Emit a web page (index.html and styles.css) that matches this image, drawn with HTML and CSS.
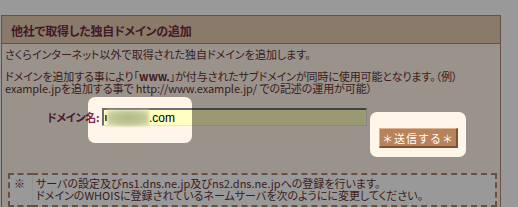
FILE: index.html
```html
<!DOCTYPE html>
<html lang="ja">
<head>
    <meta charset="UTF-8">
    <title>独自ドメインの追加</title>
    <link rel="stylesheet" href="styles.css">
</head>
<body>
    <div class="panel">
        <div class="panel-head">他社で取得した独自ドメインの追加</div>
        <div class="panel-body">
            <p class="lead">さくらインターネット以外で取得された独自ドメインを追加します。</p>
            <p class="note">ドメインを追加する事により「<b>www.</b>」が付与されたサブドメインが同時に使用可能となります。（例）<br>example.jpを追加する事で http://www.example.jp/ での記述の運用が可能）</p>

            <div class="form-row">
                <label class="label">ドメイン名:</label>
                <div class="field">
                    <span class="cut"></span>
                    <span class="blur"></span>
                    <span class="tld">.com</span>
                </div>
            </div>
            <div class="submit-row">
                <button class="submit">＊送信する＊</button>
            </div>

            <table class="caution">
                <tr>
                    <td class="mark">※</td>
                    <td class="msg">サーバの設定及びns1.dns.ne.jp及びns2.dns.ne.jpへの登録を行います。<br>ドメインのWHOISに登録されているネームサーバを次のようにに変更してください。</td>
                </tr>
            </table>
        </div>
    </div>

    <!-- tutorial dimming with two spotlights -->
    <svg class="dim" width="518" height="207" viewBox="0 0 518 207">
        <path fill-rule="evenodd" fill="rgba(0,0,0,0.4)" d="M0 0 H518 V207 H0 Z
            M95 97 H185 A7 7 0 0 1 192 104 V136 A7 7 0 0 1 185 143 H95 A7 7 0 0 1 88 136 V104 A7 7 0 0 1 95 97 Z
            M377 112 H459 A7 7 0 0 1 466 119 V150 A7 7 0 0 1 459 157 H377 A7 7 0 0 1 370 150 V119 A7 7 0 0 1 377 112 Z"/>
    </svg>
</body>
</html>
```

FILE: styles.css
```css
body {
    margin: 0;
    width: 518px;
    height: 207px;
    overflow: hidden;
    background: #fff;
    font-family: "Noto Sans CJK JP", sans-serif;
    font-size: 11px;
    font-feature-settings: "palt";
    color: #663333;
}

.panel {
    margin: 15px 0 0 1px;
    width: 498px;
    height: 200px;
    border: 1px solid #b1856b;
    background: #fff5e8;
}

.panel-head {
    height: 27px;
    line-height: 29px;
    padding-left: 9px;
    background: #e6cbb1;
    border-bottom: 1px solid #b1856b;
    color: #6e2c42;
    font-size: 12px;
    font-weight: bold;
    letter-spacing: -0.2px;
}

.panel-body {
    padding: 4px 0 0 3px;
}

.lead {
    margin: 0;
    line-height: 12px;
}

.note {
    margin: 10px 0 0;
    line-height: 12px;
    letter-spacing: -0.1px;
}

.note b {
    font-weight: bold;
}

.form-row {
    display: flex;
    align-items: center;
    margin-top: 14px;
    padding-left: 42px;
}

.label {
    width: 55px;
    color: #7e2e52;
    font-weight: bold;
    font-size: 11px;
    letter-spacing: -0.3px;
}

.field {
    display: flex;
    align-items: center;
    width: 262px;
    height: 15px;
    background: #ffffc0;
    border-top: 2px solid #6e6e6e;
    border-left: 2px solid #6e6e6e;
    border-bottom: 1px solid #e2e2e2;
    border-right: 1px solid #e2e2e2;
}

.cut {
    width: 2px;
    height: 6px;
    margin-left: 1px;
    background: #333;
}

.blur {
    width: 42px;
    height: 16px;
    background: radial-gradient(ellipse at center, #b2b98a 0%, #c2c796 55%, #e6e8b8 100%);
    filter: blur(1.5px);
}

.tld {
    color: #000;
    font-family: "Liberation Sans", sans-serif;
    font-size: 12px;
    font-feature-settings: normal;
}

.submit-row {
    display: flex;
    justify-content: flex-end;
    padding-right: 42px;
    margin-top: 2px;
}

.submit {
    width: 79px;
    height: 20px;
    padding: 0;
    background: #b8835a;
    color: #fff;
    font-family: "Noto Sans CJK JP", sans-serif;
    font-size: 11px;
    letter-spacing: 1px;
    border-top: 1px solid #dcb592;
    border-left: 1px solid #dcb592;
    border-bottom: 2px solid #7f5233;
    border-right: 2px solid #7f5233;
}

.caution {
    margin: 25px 0 0 3px;
    width: 489px;
    border: 2px dashed #b1856b;
    border-collapse: collapse;
    background: #fff;
}

.caution td {
    padding: 2px 0 4px;
    line-height: 12px;
    vertical-align: top;
}

.caution .mark {
    width: 18px;
    padding-left: 4px;
    border-right: 1px solid #f4f4f4;
}

.caution .msg {
    padding-left: 3px;
}

.dim {
    position: absolute;
    top: 0;
    left: 0;
}
```
